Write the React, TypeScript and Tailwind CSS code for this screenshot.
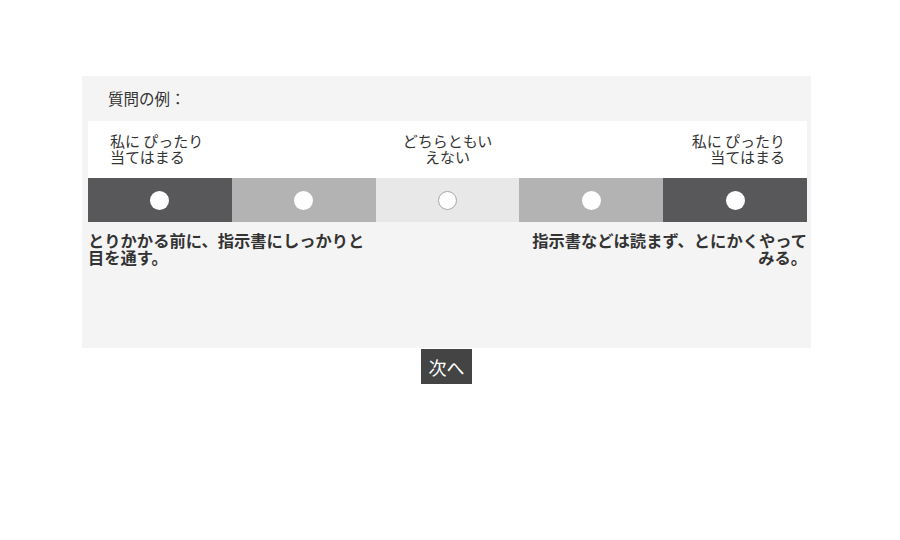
import React from 'react';

const segments = [
  { bg: 'bg-[#58585a]', ring: false },
  { bg: 'bg-[#b3b3b3]', ring: false },
  { bg: 'bg-[#e8e8e8]', ring: true },
  { bg: 'bg-[#b3b3b3]', ring: false },
  { bg: 'bg-[#58585a]', ring: false },
];

const App: React.FC = () => {
  return (
    <div
      className="w-[900px] h-[540px] bg-white text-[#333]"
      style={{ fontFamily: '"Noto Sans CJK JP", "Noto Sans", sans-serif' }}
    >
      <div className="pt-[76px] pl-[82px] w-[811px]">
        {/* Question panel */}
        <div className="bg-[#f4f4f4] h-[272px] pl-[6px] pr-[4px]">
          <div className="h-[45px] flex items-center pl-[20px] text-[15.5px] leading-none">
            質問の例：
          </div>

          <div className="bg-white h-[57px] grid grid-cols-5 pt-[12px] text-[15px] leading-[16px]">
            <div className="pl-[22px]">
              私に ぴったり
              <br />
              当てはまる
            </div>
            <div />
            <div className="text-center">
              どちらともい
              <br />
              えない
            </div>
            <div />
            <div className="text-right pr-[22px]">
              私に ぴったり
              <br />
              当てはまる
            </div>
          </div>

          {/* Scale */}
          <div className="grid grid-cols-5 h-[44px]">
            {segments.map((s, i) => (
              <div key={i} className={`${s.bg} flex items-center justify-center`}>
                <span
                  className={`block w-[19px] h-[19px] rounded-full bg-white ${
                    s.ring ? 'border border-[#a8a8a8]' : ''
                  }`}
                />
              </div>
            ))}
          </div>

          <div className="flex justify-between pt-[10px] text-[16.3px] leading-[17px] font-bold">
            <p className="w-[285px]">とりかかる前に、指示書にしっかりと目を通す。</p>
            <p className="w-[285px] text-right">指示書などは読まず、とにかくやってみる。</p>
          </div>
        </div>

        <div className="flex justify-center pt-px">
          <button className="bg-[#444] text-white text-[18px] leading-none h-[35px] w-[51px]">
            次へ
          </button>
        </div>
      </div>
    </div>
  );
};

export default App;
